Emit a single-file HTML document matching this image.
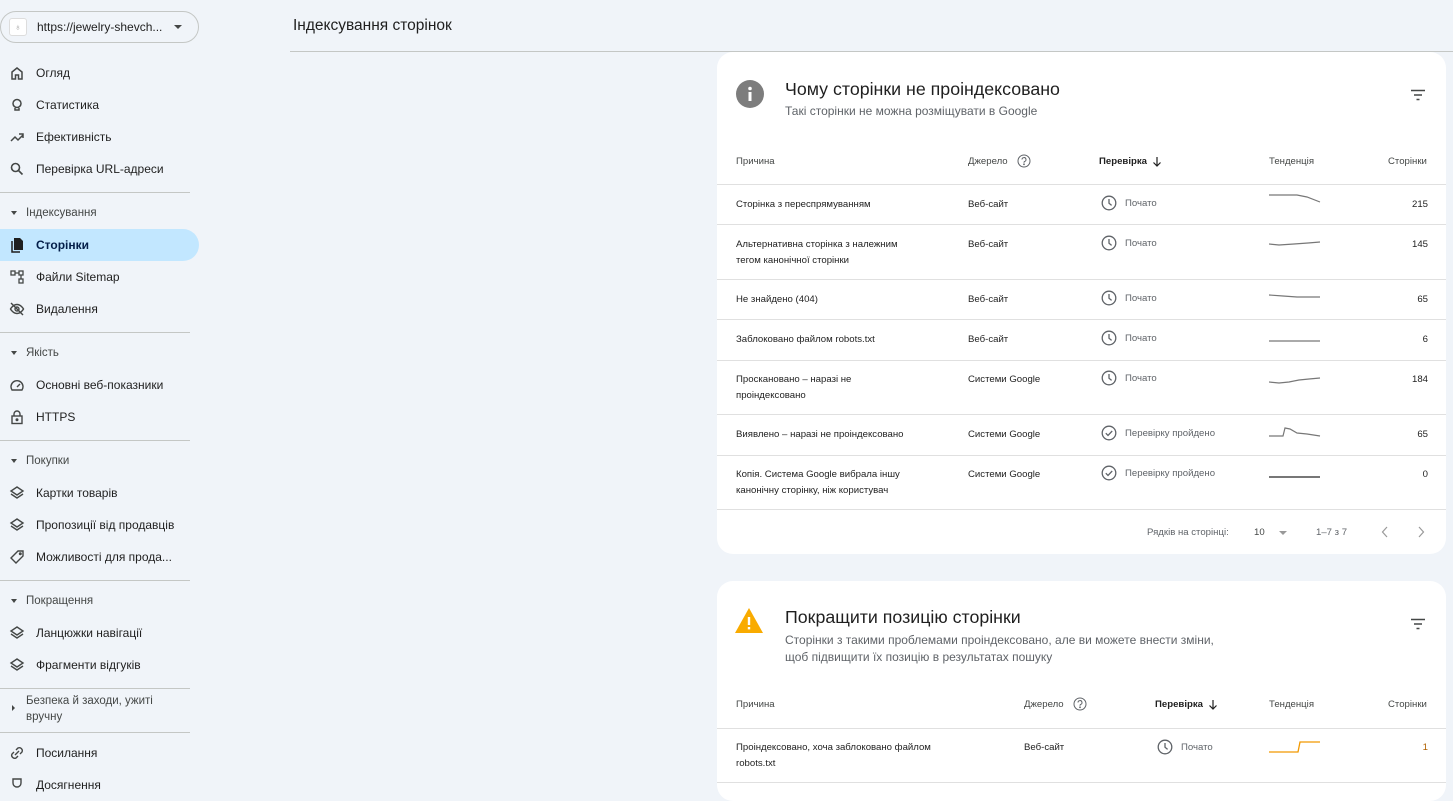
<!DOCTYPE html>
<html><head><meta charset="utf-8"><style>
*{margin:0;padding:0;box-sizing:border-box}
body{width:1453px;height:786px;overflow:hidden;background:#f0f4f9;font-family:"Liberation Sans",Arial,sans-serif;color:#1f1f1f;position:relative}
.a{position:absolute;white-space:nowrap}
.nav{position:absolute;left:36px;font-size:12px;color:#1f1f1f;transform:translateY(-50%)}
.ic{position:absolute;left:9px;width:16px;height:16px;transform:translateY(-50%)}
.sec{position:absolute;left:26px;font-size:11.5px;color:#444746;transform:translateY(-50%)}
.tri{position:absolute;left:11px;width:0;height:0;border-left:3.5px solid transparent;border-right:3.5px solid transparent;border-top:4px solid #444746;transform:translateY(-50%)}
.div{position:absolute;left:0;width:190px;height:1px;background:#c4c7c5}
.card{position:absolute;left:717px;width:729px;background:#fff;border-radius:16px}
.t{position:absolute;font-size:9.6px;color:#1f1f1f;line-height:16px;white-space:nowrap}
.h{font-size:9.6px;color:#444746}
.hr{position:absolute;left:0;width:729px;height:1px;background:#e0e0e0}
.g{color:#5f6368}
</style></head><body>
<div class="a" style="left:0;top:11px;width:199px;height:32px;border:1px solid #c4c7c5;border-radius:16px;background:#f0f4f9"></div>
<div class="a" style="left:9px;top:18px;width:18px;height:18px;background:#fff;border:1px solid #ddd;border-radius:3px;font-size:9px;color:#999;text-align:center;line-height:16px">♁</div>
<div class="a" style="left:37px;top:20px;font-size:12px;color:#1f1f1f">https://jewelry-shevch...</div>
<div class="a" style="left:174px;top:25px;border-left:4px solid transparent;border-right:4px solid transparent;border-top:4px solid #444746"></div>
<div class="a" style="left:293px;top:17px;font-size:15.5px;color:#1f1f1f">Індексування сторінок</div>
<div class="a" style="left:290px;top:51px;width:1163px;height:1px;background:#c4c7c5"></div>

<div class="a" style="left:0;top:229px;width:199px;height:32px;background:#c2e7ff;border-radius:0 16px 16px 0"></div>
<svg class="ic" style="top:73px" viewBox="0 0 16 16" fill="none" stroke="#444746" stroke-width="1.5"><path d="M3 14V7l5-4 5 4v7h-3.5v-4h-3v4z"/></svg>
<div class="nav" style="top:73px">Огляд</div>
<svg class="ic" style="top:105px" viewBox="0 0 16 16" fill="none" stroke="#444746" stroke-width="1.5"><circle cx="8" cy="6.5" r="4"/><path d="M6 11v2h4v-2"/></svg>
<div class="nav" style="top:105px">Статистика</div>
<svg class="ic" style="top:137px" viewBox="0 0 16 16" fill="none" stroke="#444746" stroke-width="1.5"><path d="M2 12l4-4 3 3 5-5M10 5h4v4"/></svg>
<div class="nav" style="top:137px">Ефективність</div>
<svg class="ic" style="top:169px" viewBox="0 0 16 16" fill="none" stroke="#444746" stroke-width="1.6"><circle cx="6.5" cy="6.5" r="4"/><path d="M9.5 9.5l4 4"/></svg>
<div class="nav" style="top:169px">Перевірка URL-адреси</div>
<div class="div" style="top:192px"></div>
<div class="tri" style="top:213px"></div><div class="sec" style="top:213px">Індексування</div>
<svg class="ic" style="top:245px" viewBox="0 0 16 16"><path d="M5 1h6l3 3v9H5z" fill="#1f1f1f"/><path d="M3 4v11h8" stroke="#1f1f1f" stroke-width="1.5" fill="none"/></svg>
<div class="nav" style="top:245px;color:#041e49;font-weight:600">Сторінки</div>
<svg class="ic" style="top:277px" viewBox="0 0 16 16" fill="none" stroke="#444746" stroke-width="1.3"><rect x="2" y="2" width="4" height="4"/><rect x="10" y="2" width="4" height="4"/><rect x="10" y="10" width="4" height="4"/><path d="M6 4h4M12 6v4"/></svg>
<div class="nav" style="top:277px">Файли Sitemap</div>
<svg class="ic" style="top:309px" viewBox="0 0 16 16" fill="none" stroke="#444746" stroke-width="1.4"><path d="M1.5 8s2.5-4.5 6.5-4.5S14.5 8 14.5 8 12 12.5 8 12.5 1.5 8 1.5 8z"/><circle cx="8" cy="8" r="2"/><path d="M2 2l12 12"/></svg>
<div class="nav" style="top:309px">Видалення</div>
<div class="div" style="top:332px"></div>
<div class="tri" style="top:353px"></div><div class="sec" style="top:353px">Якість</div>
<svg class="ic" style="top:385px" viewBox="0 0 16 16" fill="none" stroke="#444746" stroke-width="1.4"><path d="M3 13a6 6 0 1 1 10 0z"/><path d="M8 10l3-3"/></svg>
<div class="nav" style="top:385px">Основні веб-показники</div>
<svg class="ic" style="top:417px" viewBox="0 0 16 16" fill="none" stroke="#444746" stroke-width="1.4"><rect x="3" y="7" width="10" height="7.5"/><path d="M5 7V5a3 3 0 0 1 6 0v2"/><circle cx="8" cy="10.7" r=".8" fill="#444746"/></svg>
<div class="nav" style="top:417px">HTTPS</div>
<div class="div" style="top:440px"></div>
<div class="tri" style="top:461px"></div><div class="sec" style="top:461px">Покупки</div>
<svg class="ic" style="top:493px" viewBox="0 0 16 16" fill="none" stroke="#444746" stroke-width="1.4"><path d="M8 2l6 4-6 4-6-4z"/><path d="M2 9l6 4 6-4"/></svg>
<div class="nav" style="top:493px">Картки товарів</div>
<svg class="ic" style="top:525px" viewBox="0 0 16 16" fill="none" stroke="#444746" stroke-width="1.4"><path d="M8 2l6 4-6 4-6-4z"/><path d="M2 9l6 4 6-4"/></svg>
<div class="nav" style="top:525px">Пропозиції від продавців</div>
<svg class="ic" style="top:557px" viewBox="0 0 16 16" fill="none" stroke="#444746" stroke-width="1.4"><path d="M9 2h5v5l-7 7-5-5z"/><circle cx="11.3" cy="4.7" r=".8"/></svg>
<div class="nav" style="top:557px">Можливості для прода...</div>
<div class="div" style="top:580px"></div>
<div class="tri" style="top:601px"></div><div class="sec" style="top:601px">Покращення</div>
<svg class="ic" style="top:633px" viewBox="0 0 16 16" fill="none" stroke="#444746" stroke-width="1.4"><path d="M8 2l6 4-6 4-6-4z"/><path d="M2 9l6 4 6-4"/></svg>
<div class="nav" style="top:633px">Ланцюжки навігації</div>
<svg class="ic" style="top:665px" viewBox="0 0 16 16" fill="none" stroke="#444746" stroke-width="1.4"><path d="M8 2l6 4-6 4-6-4z"/><path d="M2 9l6 4 6-4"/></svg>
<div class="nav" style="top:665px">Фрагменти відгуків</div>
<div class="div" style="top:688px"></div>
<div class="a" style="left:12px;top:705px;border-top:3px solid transparent;border-bottom:3px solid transparent;border-left:3.5px solid #444746"></div>
<div class="a" style="left:26px;top:693px;font-size:11.5px;color:#444746;line-height:16px;white-space:normal;width:150px">Безпека й заходи, ужиті вручну</div>
<div class="div" style="top:732px"></div>
<svg class="ic" style="top:753px" viewBox="0 0 16 16" fill="none" stroke="#444746" stroke-width="1.4"><path d="M7 5l2-2a3 3 0 0 1 4 4l-2 2M9 11l-2 2a3 3 0 0 1-4-4l2-2M6 10l4-4"/></svg>
<div class="nav" style="top:753px">Посилання</div>
<svg class="ic" style="top:785px" viewBox="0 0 16 16" fill="none" stroke="#444746" stroke-width="1.4"><path d="M4 2h8v4a4 4 0 0 1-8 0z"/></svg>
<div class="nav" style="top:785px">Досягнення</div>

<div class="card" style="top:52px;height:502px">
  <svg class="a" style="left:19px;top:28px" width="28" height="28" viewBox="0 0 28 28"><circle cx="14" cy="14" r="14" fill="#7d7d7d"/><rect x="12.5" y="12" width="3" height="9" fill="#fff"/><circle cx="14" cy="8.5" r="1.8" fill="#fff"/></svg>
  <div class="a" style="left:68px;top:27px;font-size:17.8px;color:#1f1f1f">Чому сторінки не проіндексовано</div>
  <div class="a" style="left:68px;top:52px;font-size:12px;color:#5f6368">Такі сторінки не можна розміщувати в Google</div>
  <svg class="a" style="left:693px;top:37px" width="16" height="12" viewBox="0 0 16 12" stroke="#444746" stroke-width="1.4"><path d="M1 1.5h14M4 6h8M6.5 10.5h3"/></svg>

  <div class="t h" style="left:19px;top:102px">Причина</div>
  <div class="t h" style="left:251px;top:102px">Джерело</div>
  <svg class="a" style="left:300px;top:102px" width="14" height="14" viewBox="0 0 14 14" fill="none" stroke="#5f6368" stroke-width="1"><circle cx="7" cy="7" r="6"/><path d="M5 5.5a2 2 0 1 1 2.5 2c-.4.2-.5.5-.5 1.2"/><circle cx="7" cy="10.3" r=".4" fill="#5f6368"/></svg>
  <div class="t" style="left:382px;top:102px;font-weight:bold">Перевірка</div>
  <svg class="a" style="left:435px;top:104px" width="10" height="11" viewBox="0 0 10 11" fill="none" stroke="#1f1f1f" stroke-width="1.2"><path d="M5 1v9M1.5 6.5L5 10l3.5-3.5"/></svg>
  <div class="t h" style="left:552px;top:102px">Тенденція</div>
  <div class="t h" style="left:671px;top:102px">Сторінки</div>
  <div class="hr" style="top:132px"></div>

  <div class="t" style="left:19px;top:145px">Сторінка з переспрямуванням</div>
  <div class="t" style="left:251px;top:145px">Веб-сайт</div>
  <div class="t" style="right:18px;top:145px">215</div>
  <div class="hr" style="top:172px"></div>

  <div class="t" style="left:19px;top:185px">Альтернативна сторінка з належним<br>тегом канонічної сторінки</div>
  <div class="t" style="left:251px;top:185px">Веб-сайт</div>
  <div class="t" style="right:18px;top:185px">145</div>
  <div class="hr" style="top:227px"></div>

  <div class="t" style="left:19px;top:240px">Не знайдено (404)</div>
  <div class="t" style="left:251px;top:240px">Веб-сайт</div>
  <div class="t" style="right:18px;top:240px">65</div>
  <div class="hr" style="top:267px"></div>

  <div class="t" style="left:19px;top:280px">Заблоковано файлом robots.txt</div>
  <div class="t" style="left:251px;top:280px">Веб-сайт</div>
  <div class="t" style="right:18px;top:280px">6</div>
  <div class="hr" style="top:308px"></div>

  <div class="t" style="left:19px;top:320px">Проскановано – наразі не<br>проіндексовано</div>
  <div class="t" style="left:251px;top:320px">Системи Google</div>
  <div class="t" style="right:18px;top:320px">184</div>
  <div class="hr" style="top:362px"></div>

  <div class="t" style="left:19px;top:375px">Виявлено – наразі не проіндексовано</div>
  <div class="t" style="left:251px;top:375px">Системи Google</div>
  <div class="t" style="right:18px;top:375px">65</div>
  <div class="hr" style="top:403px"></div>

  <div class="t" style="left:19px;top:415px">Копія. Система Google вибрала іншу<br>канонічну сторінку, ніж користувач</div>
  <div class="t" style="left:251px;top:415px">Системи Google</div>
  <div class="t" style="right:18px;top:415px">0</div>
  <div class="hr" style="top:457px"></div>

  <div class="t g" style="left:430px;top:473px">Рядків на сторінці:</div>
  <div class="t" style="left:537px;top:473px;color:#444746">10</div>
  <div class="a" style="left:562px;top:479px;border-left:4px solid transparent;border-right:4px solid transparent;border-top:4px solid #999"></div>
  <div class="t g" style="left:599px;top:473px">1–7 з 7</div>
  <svg class="a" style="left:664px;top:474px" width="8" height="12" fill="none" stroke="#999" stroke-width="1.2"><path d="M6 1L1.5 6 6 11"/></svg>
  <svg class="a" style="left:700px;top:474px" width="8" height="12" fill="none" stroke="#999" stroke-width="1.2"><path d="M2 1l4.5 5L2 11"/></svg>
</div>

<svg width="0" height="0" style="position:absolute"><defs>
<symbol id="clk" viewBox="0 0 16 16"><circle cx="8" cy="8" r="6.8" fill="none" stroke="#5f6368" stroke-width="1.3"/><path d="M8 4v4.2l2.6 2.2" fill="none" stroke="#5f6368" stroke-width="1.3"/></symbol>
<symbol id="chk" viewBox="0 0 16 16"><circle cx="8" cy="8" r="6.8" fill="none" stroke="#5f6368" stroke-width="1.3"/><path d="M4.8 8.2l2.2 2.2 4.2-4.4" fill="none" stroke="#5f6368" stroke-width="1.3"/></symbol>
</defs></svg>
<svg class="a" style="left:1101px;top:195px" width="16" height="16"><use href="#clk"/></svg><div class="t g" style="left:1125px;top:196px">Почато</div>
<svg class="a" style="left:1101px;top:235px" width="16" height="16"><use href="#clk"/></svg><div class="t g" style="left:1125px;top:236px">Почато</div>
<svg class="a" style="left:1101px;top:290px" width="16" height="16"><use href="#clk"/></svg><div class="t g" style="left:1125px;top:291px">Почато</div>
<svg class="a" style="left:1101px;top:330px" width="16" height="16"><use href="#clk"/></svg><div class="t g" style="left:1125px;top:331px">Почато</div>
<svg class="a" style="left:1101px;top:370px" width="16" height="16"><use href="#clk"/></svg><div class="t g" style="left:1125px;top:371px">Почато</div>
<svg class="a" style="left:1101px;top:425px" width="16" height="16"><use href="#chk"/></svg><div class="t g" style="left:1125px;top:426px">Перевірку пройдено</div>
<svg class="a" style="left:1101px;top:465px" width="16" height="16"><use href="#chk"/></svg><div class="t g" style="left:1125px;top:466px">Перевірку пройдено</div>

<svg class="a" style="left:1269px;top:185px" width="52" height="300" viewBox="0 0 52 300" fill="none" stroke="#777" stroke-width="1.2">
<path d="M0 10h28l10 2 13 5"/>
<path d="M0 59l10 1 15-1 14-1 12-1"/>
<path d="M0 110l14 1 14 1h23"/>
<path d="M0 156h51"/>
<path d="M0 197l10 1 10-1 10-2 10-1 11-1"/>
<path d="M0 251h14l2-8 5 1 7 4 10 1 13 2"/>
<path d="M0 292h51" stroke-width="2"/>
</svg>

<div class="card" style="top:581px;height:220px">
  <svg class="a" style="left:17px;top:26px" width="30" height="27" viewBox="0 0 30 27"><path d="M15 1L29 26H1z" fill="#f9ab00"/><rect x="13.8" y="10" width="2.4" height="8" fill="#fff"/><rect x="13.8" y="20" width="2.4" height="2.4" fill="#fff"/></svg>
  <div class="a" style="left:68px;top:26px;font-size:17.8px;color:#1f1f1f">Покращити позицію сторінки</div>
  <div class="a" style="left:68px;top:51px;font-size:12px;color:#5f6368;line-height:17px">Сторінки з такими проблемами проіндексовано, але ви можете внести зміни,<br>щоб підвищити їх позицію в результатах пошуку</div>
  <svg class="a" style="left:693px;top:37px" width="16" height="12" viewBox="0 0 16 12" stroke="#444746" stroke-width="1.4"><path d="M1 1.5h14M4 6h8M6.5 10.5h3"/></svg>
  <div class="t h" style="left:19px;top:116px">Причина</div>
  <div class="t h" style="left:307px;top:116px">Джерело</div>
  <svg class="a" style="left:356px;top:116px" width="14" height="14" viewBox="0 0 14 14" fill="none" stroke="#5f6368" stroke-width="1"><circle cx="7" cy="7" r="6"/><path d="M5 5.5a2 2 0 1 1 2.5 2c-.4.2-.5.5-.5 1.2"/><circle cx="7" cy="10.3" r=".4" fill="#5f6368"/></svg>
  <div class="t" style="left:438px;top:116px;font-weight:bold">Перевірка</div>
  <svg class="a" style="left:491px;top:118px" width="10" height="11" viewBox="0 0 10 11" fill="none" stroke="#1f1f1f" stroke-width="1.2"><path d="M5 1v9M1.5 6.5L5 10l3.5-3.5"/></svg>
  <div class="t h" style="left:552px;top:116px">Тенденція</div>
  <div class="t h" style="left:671px;top:116px">Сторінки</div>
  <div class="hr" style="top:147px"></div>
  <div class="t" style="left:19px;top:159px">Проіндексовано, хоча заблоковано файлом<br>robots.txt</div>
  <div class="t" style="left:307px;top:159px">Веб-сайт</div>
  <svg class="a" style="left:440px;top:158px" width="16" height="16"><use href="#clk"/></svg><div class="t g" style="left:464px;top:159px">Почато</div>
  <svg class="a" style="left:552px;top:158px" width="52" height="16" fill="none" stroke="#f29900" stroke-width="1.3"><path d="M0 13h29l2-10h20"/></svg>
  <div class="t" style="right:18px;top:159px;color:#b06000">1</div>
  <div class="hr" style="top:201px"></div>
</div>
</body></html>
